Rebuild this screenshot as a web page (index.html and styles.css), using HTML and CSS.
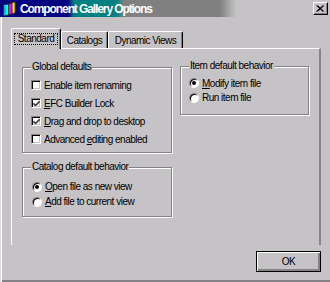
FILE: index.html
```html
<!DOCTYPE html>
<html>
<head>
<meta charset="utf-8">
<link rel="stylesheet" href="styles.css">
</head>
<body>
<div class="window">
  <div class="titlebar">
    <svg class="app-icon" width="15" height="15" viewBox="0 0 15 15">
      <polygon points="8,2 13,1 13,12 8,13" fill="#ffff00" stroke="#404000" stroke-width="1"/>
      <polygon points="5,3 10,2 10,13 5,14" fill="#ff00ff" stroke="#400040" stroke-width="1"/>
      <polygon points="1.5,4 6.5,3 6.5,14 1.5,14.5" fill="#00ffff" stroke="#004040" stroke-width="1"/>
      <line x1="3" y1="5" x2="3" y2="13" stroke="#008080" stroke-width="1"/>
    </svg>
    <span class="title">Component Gallery Options</span>
    <div class="close">
      <svg width="8" height="7" viewBox="0 0 8 7"><path d="M0.5 0.5 L7 6.5 M1.5 0.5 L8 6.5 M7 0.5 L0.5 6.5 M8 0.5 L1.5 6.5" stroke="#000" stroke-width="1"/></svg>
    </div>
  </div>
  <div class="content">
    <div class="tabs">
      <div class="tab tab-active"><span class="focus">Standard</span></div>
      <div class="tab tab-catalogs">Catalogs</div>
      <div class="tab tab-views">Dynamic Views</div>
    </div>
    <div class="panel">
      <div class="col-left">
        <div class="group group-global">
          <span class="legend">Global defaults</span>
          <div class="rows rows-check">
            <div class="row"><span class="check"></span><span>Enable item renaming</span></div>
            <div class="row"><span class="check checked"><svg width="7" height="7" viewBox="0 0 7 7"><path d="M0.5 3 L2.5 5 L6.5 1 M0.5 4 L2.5 6 L6.5 2" stroke="#000" stroke-width="1" fill="none"/></svg></span><span><u>E</u>FC Builder Lock</span></div>
            <div class="row"><span class="check checked"><svg width="7" height="7" viewBox="0 0 7 7"><path d="M0.5 3 L2.5 5 L6.5 1 M0.5 4 L2.5 6 L6.5 2" stroke="#000" stroke-width="1" fill="none"/></svg></span><span><u>D</u>rag and drop to desktop</span></div>
            <div class="row"><span class="check"></span><span>Advanced <u>e</u>diting enabled</span></div>
          </div>
        </div>
        <div class="group group-catalog">
          <span class="legend">Catalog default behavior</span>
          <div class="rows rows-radio">
            <div class="row"><span class="radio selected"></span><span><u>O</u>pen file as new view</span></div>
            <div class="row"><span class="radio"></span><span><u>A</u>dd file to current view</span></div>
          </div>
        </div>
      </div>
      <div class="col-right">
        <div class="group group-item">
          <span class="legend">Item default behavior</span>
          <div class="rows rows-radio2">
            <div class="row"><span class="radio selected"></span><span><u>M</u>odify item file</span></div>
            <div class="row"><span class="radio"></span><span>Run item file</span></div>
          </div>
        </div>
      </div>
    </div>
    <div class="buttons">
      <div class="btn-ok">OK</div>
    </div>
  </div>
</div>
</body>
</html>
```

FILE: styles.css
```css
html, body {
  margin: 0;
  padding: 0;
}
body {
  background: #c6c3c6;
  font-family: "Liberation Sans", Arial, sans-serif;
  font-size: 10px;
  letter-spacing: -0.5px;
  color: #000;
}
.window {
  width: 330px;
  height: 282px;
  box-sizing: border-box;
  box-shadow: inset 1px 0 #dfdfdf, inset 2px 0 #fff, inset 0 -2px #848284;
  display: flex;
  flex-direction: column;
  overflow: hidden;
}
.titlebar {
  height: 17px;
  flex: none;
  display: flex;
  align-items: center;
  background: linear-gradient(to right, #000080 0px, #000080 68px, #008080 74px, #008080 116px, #808080 124px, #808080 220px, #c6c3c6 236px);
}
.app-icon {
  margin-left: 2px;
  flex: none;
}
.title {
  margin-left: 3px;
  color: #fff;
  font-weight: bold;
  font-size: 12px;
  letter-spacing: -1.1px;
  white-space: nowrap;
}
.close {
  margin-left: auto;
  margin-right: 2px;
  width: 15px;
  height: 13px;
  box-sizing: border-box;
  border: 1px solid;
  border-color: #fff #000 #000 #fff;
  box-shadow: inset -1px -1px #848284;
  background: #c6c3c6;
  display: flex;
  align-items: center;
  justify-content: center;
  padding-right: 1px;
}
.content {
  padding: 11px 0 0 11px;
  display: flex;
  flex-direction: column;
}
.tabs {
  display: flex;
  align-items: flex-end;
  height: 21px;
  margin-bottom: -1px;
}
.tab {
  box-sizing: border-box;
  border-top: 1px solid #fff;
  border-left: 1px solid #fff;
  border-right: 1px solid #000;
  box-shadow: inset -1px 0 #848284;
  border-radius: 2px 2px 0 0;
  background: #c6c3c6;
  display: flex;
  justify-content: center;
  white-space: nowrap;
}
.tab-active {
  width: 50px;
  height: 21px;
  position: relative;
  z-index: 1;
  padding-top: 4px;
}
.focus {
  display: block;
  width: 44px;
  height: 12px;
  box-sizing: border-box;
  border: 1px dotted #000;
  text-align: center;
  line-height: 10px;
}
.tab-catalogs {
  width: 47px;
  height: 18px;
  padding-top: 3px;
  line-height: 11px;
}
.tab-views {
  width: 75px;
  height: 18px;
  padding-top: 3px;
  line-height: 11px;
}
.panel {
  width: 310px;
  height: 197px;
  box-sizing: border-box;
  border-top: 1px solid #fff;
  border-left: 1px solid #fff;
  border-right: 2px solid #868486;
  display: flex;
  gap: 8px;
  padding: 18px 0 0 10px;
}
.col-left {
  width: 150px;
  display: flex;
  flex-direction: column;
  gap: 14px;
}
.col-right {
  width: 129px;
  margin-top: -1px;
}
.group {
  box-sizing: border-box;
  border: 1px solid #848284;
  box-shadow: inset 1px 1px #fff, 1px 1px #fff;
  padding-left: 8px;
  display: flex;
  flex-direction: column;
  align-items: flex-start;
}
.group-global { height: 86px; }
.group-catalog { height: 50px; }
.group-item { height: 49px; }
.legend {
  display: block;
  margin-top: -7px;
  height: 12px;
  line-height: 12px;
  padding: 0 1px;
  background: #c6c3c6;
  white-space: nowrap;
}
.rows {
  display: flex;
  flex-direction: column;
}
.rows-check { padding-top: 3px; }
.rows-check .row { height: 18px; }
.rows-radio { padding-top: 6px; padding-left: 1px; }
.rows-radio .row { height: 15px; }
.rows-radio2 { padding-top: 4px; }
.rows-radio2 .row { height: 14.5px; }
.row {
  display: flex;
  align-items: center;
  gap: 3px;
  white-space: nowrap;
}
.check {
  width: 10px;
  height: 10px;
  box-sizing: border-box;
  flex: none;
  border: 1px solid;
  border-color: #848284 #fff #fff #848284;
  box-shadow: inset 1px 1px #000, inset -1px -1px #c6c3c6;
  background: #fff;
  display: flex;
  align-items: center;
  justify-content: center;
}
.radio {
  width: 10px;
  height: 10px;
  box-sizing: border-box;
  flex: none;
  border-radius: 50%;
  border: 1px solid;
  border-color: #848284 #fff #fff #848284;
  box-shadow: inset 1px 1px #000;
  background: #fff;
  display: flex;
  align-items: center;
  justify-content: center;
}
.radio.selected::after {
  content: "";
  width: 4px;
  height: 4px;
  border-radius: 50%;
  background: #000;
}
u {
  text-decoration: underline;
  text-underline-offset: 1px;
}
.buttons {
  display: flex;
  justify-content: flex-end;
  padding-right: 9px;
  margin-top: 6px;
}
.btn-ok {
  width: 65px;
  height: 21px;
  box-sizing: border-box;
  border: 1px solid #000;
  box-shadow: inset 1px 1px #fff, inset -2px -2px #848284;
  display: flex;
  align-items: center;
  justify-content: center;
  padding-bottom: 1px;
}
```
